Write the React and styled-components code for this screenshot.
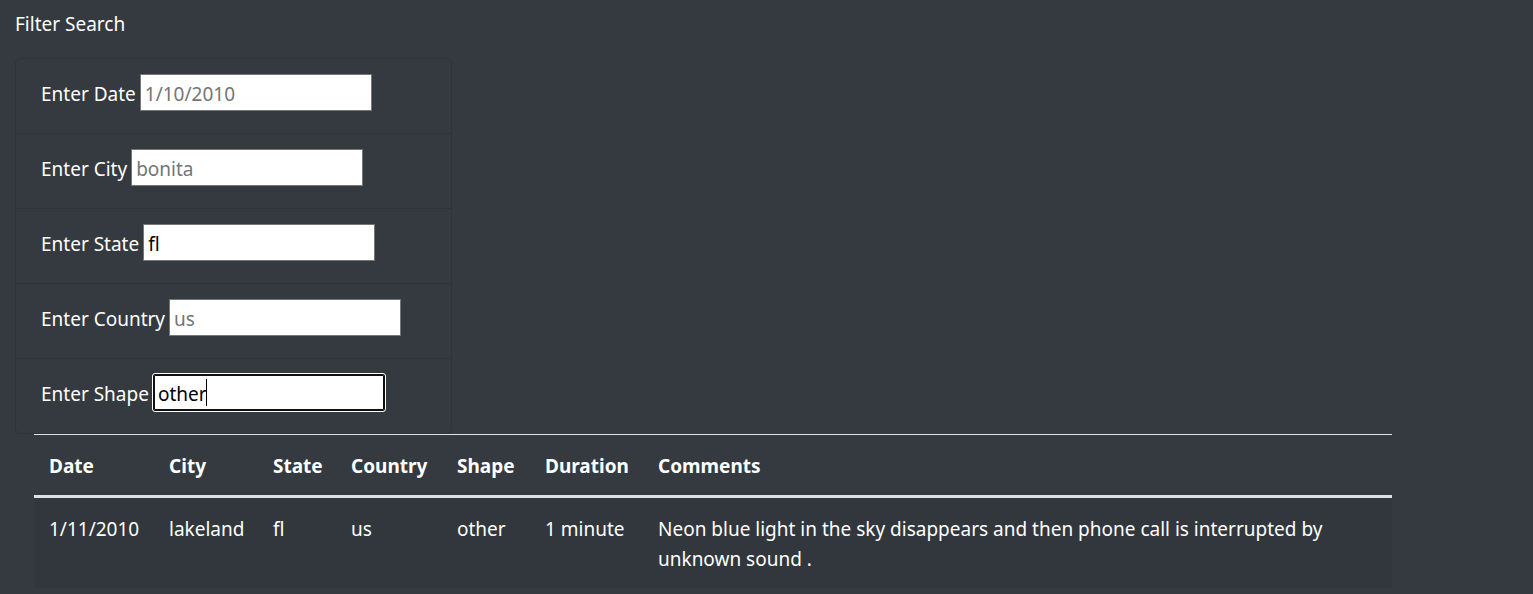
import React, { useState } from "react";
import styled, { createGlobalStyle } from "styled-components";

const GlobalStyle = createGlobalStyle`
  *, *::before, *::after { box-sizing: border-box; }
  body {
    margin: 0;
    background: #343a40;
    color: #fff;
    font-family: "Segoe UI", "Noto Sans", sans-serif;
    font-size: 19px;
    line-height: 30px;
  }
`;

const Page = styled.main`
  padding: 9px 15px 6px;
`;

const Title = styled.p`
  margin: 0 0 19px;
`;

const FilterList = styled.ul`
  list-style: none;
  margin: 0;
  padding: 0;
  width: 100%;
  max-width: 437px;
  border: 1px solid #2f3439;
  border-radius: 5px;
`;

const FilterItem = styled.li`
  display: flex;
  align-items: flex-start;
  gap: 4px;
  padding: 15px 25px 22px;

  & + & {
    border-top: 1px solid #2f3439;
  }
`;

const Label = styled.label`
  white-space: nowrap;
  padding-top: 5px;
`;

const FieldBox = styled.div`
  position: relative;
  display: flex;
  min-width: 0;
`;

const Field = styled.input`
  width: 232px;
  min-width: 0;
  height: 37px;
  margin: 0;
  padding: 3px 4px 1px;
  border: 1px solid #767676;
  border-radius: 0;
  background: #fff;
  color: #000;
  caret-color: ${({ $ownCaret }) => ($ownCaret ? "transparent" : "auto")};
  font: inherit;

  &::placeholder {
    color: #757575;
    opacity: 1;
  }

  &:focus {
    border-color: #101010;
    border-radius: 2px;
    outline: 1px solid #fff;
    box-shadow: inset 0 0 0 1px #101010;
  }
`;

const Caret = styled.span`
  position: absolute;
  top: 5px;
  left: 53px;
  width: 1px;
  height: 27px;
  background: #000;
  pointer-events: none;
`;

const TableArea = styled.section`
  max-width: 1396px;
  padding: 0 19px;
`;

const Table = styled.table`
  width: 100%;
  table-layout: fixed;
  border-collapse: separate;
  border-spacing: 0;
  text-align: left;
`;

const Column = styled.col`
  width: ${({ $width }) => ($width ? `${$width}px` : "auto")};
`;

const HeadCell = styled.th`
  padding: 16px 15px 14px;
  border-top: 1px solid #dee2e6;
  border-bottom: 3px solid #dee2e6;
  font-weight: 700;
`;

const Row = styled.tr`
  &:nth-of-type(odd) {
    background: #31373d;
  }
`;

const Cell = styled.td`
  padding: 16px 15px 14px;
  vertical-align: top;
`;

const filters = [
  { id: "date", label: "Enter Date", placeholder: "1/10/2010" },
  { id: "city", label: "Enter City", placeholder: "bonita" },
  { id: "state", label: "Enter State", placeholder: "fl", value: "fl" },
  { id: "country", label: "Enter Country", placeholder: "us" },
  { id: "shape", label: "Enter Shape", placeholder: "light", value: "other", focused: true },
];

const columns = [
  { name: "Date", width: 120 },
  { name: "City", width: 104 },
  { name: "State", width: 78 },
  { name: "Country", width: 106 },
  { name: "Shape", width: 88 },
  { name: "Duration", width: 113 },
  { name: "Comments" },
];

const sightings = [
  [
    "1/11/2010",
    "lakeland",
    "fl",
    "us",
    "other",
    "1 minute",
    "Neon blue light in the sky disappears and then phone call is interrupted by unknown sound .",
  ],
];

function Filter({ id, label, placeholder, value = "", focused = false }) {
  const [text, setText] = useState(value);
  const [untouched, setUntouched] = useState(focused);
  const release = () => setUntouched(false);
  return (
    <FilterItem>
      <Label htmlFor={id}>{label}</Label>
      <FieldBox>
        <Field
          id={id}
          type="text"
          placeholder={placeholder}
          value={text}
          autoFocus={focused}
          $ownCaret={untouched}
          onKeyDown={release}
          onPointerDown={release}
          onBlur={release}
          onChange={(event) => setText(event.target.value)}
        />
        {untouched && <Caret />}
      </FieldBox>
    </FilterItem>
  );
}

export default function App() {
  return (
    <>
      <GlobalStyle />
      <Page>
        <Title>Filter Search</Title>
        <FilterList>
          {filters.map((filter) => (
            <Filter key={filter.id} {...filter} />
          ))}
        </FilterList>
        <TableArea>
          <Table>
            <colgroup>
              {columns.map(({ name, width }) => (
                <Column key={name} $width={width} />
              ))}
            </colgroup>
            <thead>
              <tr>
                {columns.map(({ name }) => (
                  <HeadCell key={name} scope="col">{name}</HeadCell>
                ))}
              </tr>
            </thead>
            <tbody>
              {sightings.map((sighting) => (
                <Row key={sighting.join()}>
                  {sighting.map((value, index) => (
                    <Cell key={columns[index].name}>{value}</Cell>
                  ))}
                </Row>
              ))}
            </tbody>
          </Table>
        </TableArea>
      </Page>
    </>
  );
}
